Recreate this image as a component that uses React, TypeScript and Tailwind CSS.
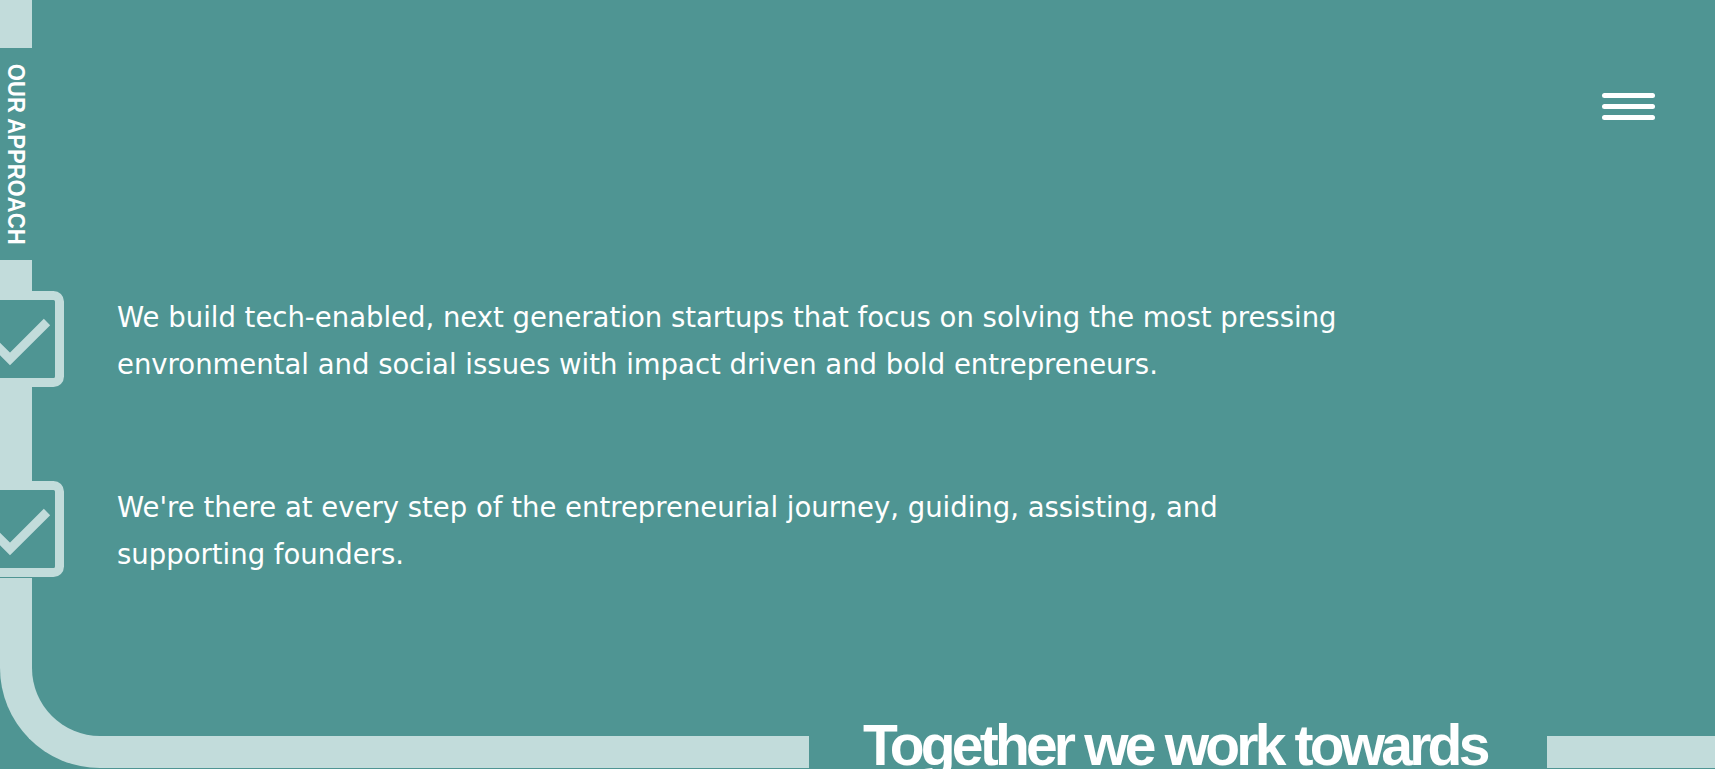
// checkbox drawn on the rail
function CheckBox() {
  return (
    <svg width="96" height="96" viewBox="0 0 96 96" className="block">
      <rect x="4.5" y="4.5" width="87" height="87" rx="6" fill="#4f9593" stroke="#c2dcdb" strokeWidth="9" />
      <polyline points="20,46 42,68 79,31" fill="none" stroke="#c2dcdb" strokeWidth="9" />
    </svg>
  );
}

const paragraphs = [
  [
    "We build tech-enabled, next generation startups that focus on solving the most pressing",
    "envronmental and social issues with impact driven and bold entrepreneurs.",
  ],
  [
    "We're there at every step of the entrepreneurial journey, guiding, assisting, and",
    "supporting founders.",
  ],
];

export default function App() {
  return (
    <div className="relative flex h-[769px] w-full flex-col overflow-hidden bg-[#4f9593] font-['DejaVu_Sans',sans-serif] text-white">
      {/* top: rail label + menu */}
      <div className="flex h-[291px] shrink-0">
        <div className="-ml-[32px] flex w-[96px] shrink-0 flex-col items-center">
          <div className="h-[48px] w-[32px] bg-[#c2dcdb]" />
          <div className="flex h-[212px] items-center justify-center">
            <span className="scale-y-[0.92] font-['Liberation_Sans',sans-serif] text-[24px] font-bold leading-none whitespace-nowrap [writing-mode:vertical-rl]">
              OUR APPROACH
            </span>
          </div>
          <div className="w-[32px] flex-1 bg-[#c2dcdb]" />
        </div>
        <div className="flex flex-1 justify-end pt-[93px] pr-[60px]">
          <button className="flex h-[27px] w-[53px] flex-col justify-between">
            <span className="h-[5px] w-full rounded-full bg-white" />
            <span className="h-[5px] w-full rounded-full bg-white" />
            <span className="h-[5px] w-full rounded-full bg-white" />
          </button>
        </div>
      </div>

      {/* first point */}
      <div className="flex h-[96px] shrink-0 items-center">
        <div className="-ml-[32px] w-[96px] shrink-0">
          <CheckBox />
        </div>
        <p className="pl-[53px] pt-[4px] text-[27.5px] leading-[47px] whitespace-nowrap">
          {paragraphs[0][0]}
          <br />
          {paragraphs[0][1]}
        </p>
      </div>

      <div className="flex h-[94px] shrink-0">
        <div className="-ml-[32px] flex w-[96px] shrink-0 justify-center">
          <div className="h-full w-[32px] bg-[#c2dcdb]" />
        </div>
      </div>

      {/* second point */}
      <div className="flex h-[96px] shrink-0 items-center">
        <div className="-ml-[32px] w-[96px] shrink-0">
          <CheckBox />
        </div>
        <p className="pl-[53px] pt-[4px] text-[27.5px] leading-[47px] whitespace-nowrap">
          {paragraphs[1][0]}
          <br />
          {paragraphs[1][1]}
        </p>
      </div>

      {/* bottom: curve into heading */}
      <div className="flex h-[192px] shrink-0 items-end">
        <div className="mb-[1px] h-[190px] w-[809px] shrink-0 rounded-bl-[100px] border-b-[32px] border-l-[32px] border-[#c2dcdb]" />
        <h2 className="ml-[54px] mt-[140px] self-start font-['Liberation_Sans',sans-serif] text-[57px] font-bold leading-none tracking-[-3.8px] whitespace-nowrap">
          Together we work towards
        </h2>
        <div className="mb-[1px] ml-[60px] h-[32px] flex-1 bg-[#c2dcdb]" />
      </div>
    </div>
  );
}
